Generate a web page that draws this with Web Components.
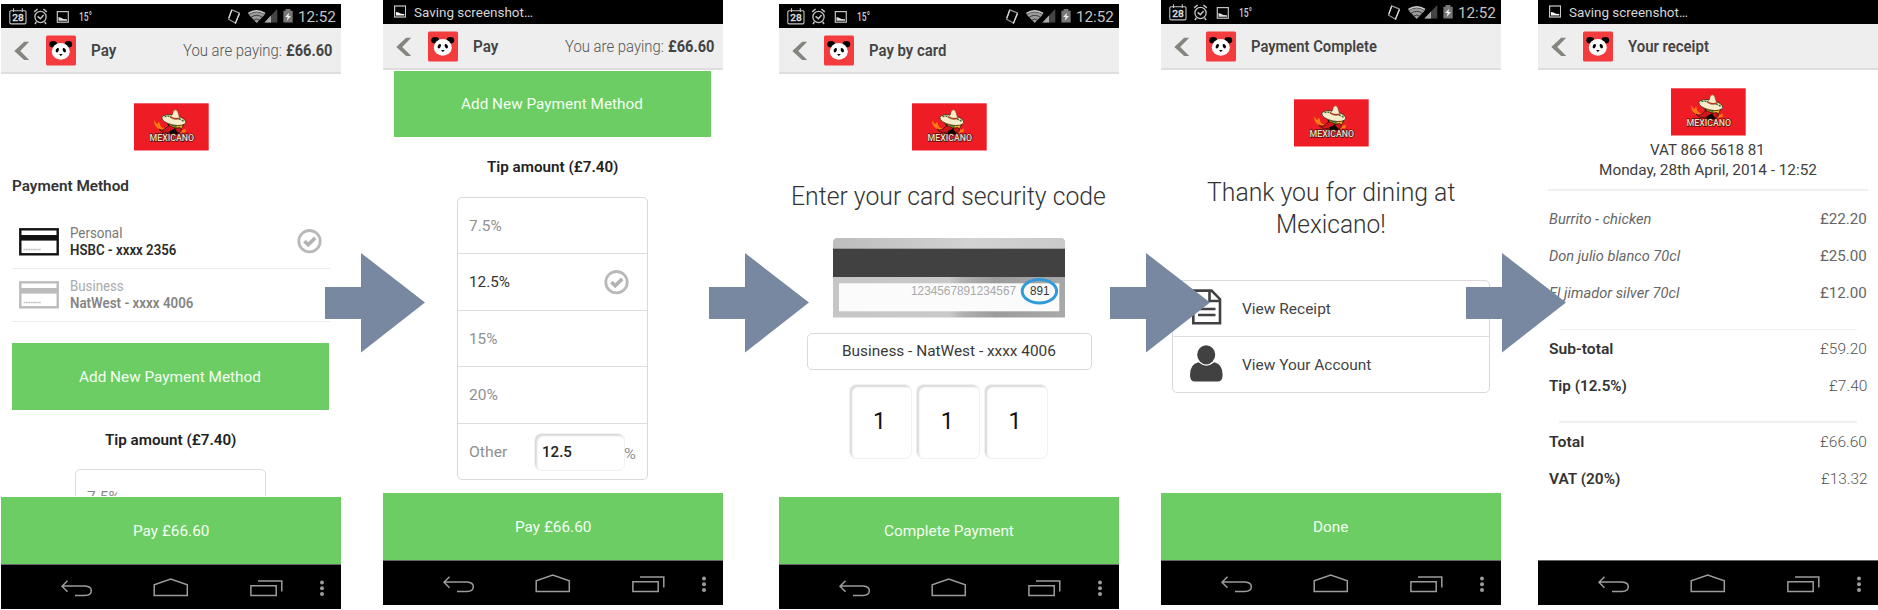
<!DOCTYPE html>
<html lang="en">
<head>
<meta charset="utf-8">
<title>Payment flow</title>
<style>
html, body { margin: 0; background: #fff; }
body { width: 1878px; height: 610px; overflow: hidden; font-family: Roboto, "Liberation Sans", sans-serif; }
</style>
</head>
<body>
<payment-flow></payment-flow>
<script>
function component(name, css, html, setup) {
  const tpl = document.createElement('template');
  tpl.innerHTML = '<style>' + css + '</style>' + html;
  customElements.define(name, class extends HTMLElement {
    constructor() {
      super();
      this.attachShadow({ mode: 'open' }).append(tpl.content.cloneNode(true));
    }
    connectedCallback() { if (setup) setup(this, this.shadowRoot); }
  });
}

component('payment-flow', `
  :host { display: block; position: relative; width: 1878px; height: 610px; overflow: hidden; }
  .row { display: flex; align-items: flex-start; padding-left: 1px; }
  phone-screen { flex: none; }
  .low { margin-top: 4px; }
  .b { margin-left: 42px; } .c { margin-left: 56px; } .d { margin-left: 42px; } .e { margin-left: 37px; }
  flow-arrow { position: absolute; top: 253px; }
`, `
  <div class="row">
    <phone-screen class="low"><status-bar></status-bar>
      <app-bar label="Pay" w="24" amount></app-bar><method-page></method-page>
      <action-bar><fit-text w="75">Pay £66.60</fit-text></action-bar></phone-screen>
    <phone-screen class="b"><status-bar saving></status-bar>
      <app-bar label="Pay" w="24" amount></app-bar><tip-page></tip-page>
      <action-bar><fit-text w="75">Pay £66.60</fit-text></action-bar></phone-screen>
    <phone-screen class="low c"><status-bar></status-bar>
      <app-bar label="Pay by card" w="76"></app-bar><code-page></code-page>
      <action-bar><fit-text w="128.5">Complete Payment</fit-text></action-bar></phone-screen>
    <phone-screen class="d"><status-bar></status-bar>
      <app-bar label="Payment Complete" w="124.5"></app-bar><thanks-page></thanks-page>
      <action-bar><fit-text w="34">Done</fit-text></action-bar></phone-screen>
    <phone-screen class="e"><status-bar saving></status-bar>
      <app-bar label="Your receipt" w="79.5"></app-bar><receipt-page></receipt-page></phone-screen>
  </div>
  <flow-arrow style="left:325px"></flow-arrow>
  <flow-arrow style="left:709px"></flow-arrow>
  <flow-arrow style="left:1110px"></flow-arrow>
  <flow-arrow style="left:1466px"></flow-arrow>
`);

component('flow-arrow', `:host { display: block; width: 100px; height: 100px; } svg { display: block; }`,
  `<svg width="100" height="100"><path d="M0 34H36V0L100 49.5 36 99.5V66H0z" fill="#7888a0"/></svg>`);

component('phone-screen', `
  :host { display: flex; flex-direction: column; width: 340px; height: 605px; background: #fff; }
  main { flex: 1; min-height: 0; display: flex; flex-direction: column; }
`, `<main><slot></slot></main><nav-bar></nav-bar>`);

component('status-bar', `
  :host { display: flex; height: 24px; background: #000; color: #ccc; align-items: center; flex: none; }
  svg { display: block; flex: none; }
  .full, .saving { display: none; width: 100%; align-items: center; height: 24px; }
  :host([saving]) .saving { display: flex; }
  :host(:not([saving])) .full { display: flex; }
  .saving fit-text { margin-left: 9px; font-size: 13.5px; color: #d5d5d5; }
  .temp { margin-left: 11px; font-size: 12px; font-weight: 500; padding-top: 1px; }
  .clock { margin-left: 6px; font-size: 15.5px; color: #c4c4c4; padding-top: 1px; }
  .gap { flex: 1; max-width: 133px; }
  text { font: 500 9.5px Roboto, sans-serif; }
`, `
  <div class="full">
    <svg width="68" height="24" fill="none" stroke="#c4c4c4">
      <path d="M10 6.7H24Q25 6.7 25 7.7V18.6Q25 19.9 23.8 19.9H10.2Q8.8 19.9 8.8 18.6V7.7Q8.8 6.7 10 6.7zM12.5 4.2V8M21.3 4.2V8" stroke-width="1.1"/>
      <text x="11.2" y="17" fill="#ddd" stroke="#ddd" stroke-width=".3" textLength="11.6" lengthAdjust="spacingAndGlyphs">28</text>
      <circle cx="39.5" cy="13" r="5.6" stroke-width="1.3"/>
      <path d="M36.6 12.4L39.4 14.7 42.6 11M33.2 7.8L36.6 5M45.8 7.8L42.4 5M35.3 18L34 20M43.7 18L45 20" stroke-width="1.5"/>
      <rect x="56.3" y="7.6" width="11" height="10.6" stroke-width="1.2"/>
      <path d="M57.5 16.8V13L60 13.8 62.5 15 66 15.2V16.8z" fill="#ddd" stroke="none"/>
    </svg>
    <fit-text class="temp" w="11.5">15°</fit-text>
    <div class="gap"></div>
    <svg width="67" height="24" style="margin-left:1px">
      <path d="M5.7 5.9L13.2 8.9 9.7 19.2 2.6 15.2z" fill="none" stroke="#999" stroke-width="1.2"/>
      <path d="M2.8 14L5.7 6.3M9.2 19.6L13.6 9.6" stroke="#ddd" stroke-width="1.2"/>
      <path d="M22 10Q30.7 3.6 39.5 10L30.7 19z" fill="#9a9a9a"/>
      <path d="M22 10.9Q30.7 4.6 39.5 10.9M24.6 13.6Q30.7 9 36.9 13.6M27.5 16.3Q30.7 13.7 34 16.3" fill="none" stroke="#000" stroke-width=".6"/>
      <path d="M22.5 9.3Q30.7 4 39 9.3" fill="none" stroke="#ccc" stroke-width="1.5"/>
      <path d="M51.3 5V18.4H38.4z" fill="#444"/><path d="M45 11.6V18.4H38.4z" fill="#aaa"/>
      <path d="M57.4 6.7H59.6V5.1H64.4V6.7H66.7V18.4H57.4z" fill="#777"/>
      <path d="M63 8.7L59.2 13H61.6L60.8 16.8 65 12H62.5z" fill="#eee"/>
    </svg>
    <fit-text class="clock" w="36.5">12:52</fit-text>
  </div>
  <div class="saving">
    <svg width="23" height="24"><rect x="11.6" y="6" width="11" height="11" fill="none" stroke="#ccc" stroke-width="1.2"/>
      <path d="M13 15.4V12L15.5 12.6 18 13.8 21.3 14V15.4z" fill="#fff"/></svg>
    <fit-text w="117.5">Saving screenshot…</fit-text>
  </div>
`);

component('app-bar', `
  :host { display: flex; flex: none; box-sizing: border-box; height: 46px; background: #eee;
    border-bottom: 2px solid #dedede; align-items: center; color: #444; font-size: 16px; }
  svg { display: block; flex: none; }
  .title { margin-left: 14.7px; font-weight: 600; padding-top: 1px; }
  .pay { display: none; margin-left: auto; padding: 1px 9.5px 0 0; gap: 5px; color: #555; }
  :host([amount]) .pay { display: flex; }
  .pay .k { font-weight: 300; } .pay .v { font-weight: 700; color: #444; }
`, `
  <svg width="76" height="44">
    <path d="M23.2 13.7H28.2L19.2 22.9 28.2 32.1H23.2L13.3 22.9z" fill="#85857f"/>
    <rect x="45" y="7.5" width="30" height="30" rx="1.5" fill="#f43b3e"/>
    <ellipse cx="52.2" cy="16.3" rx="3.9" ry="3.3" fill="#000"/><ellipse cx="67.3" cy="16.3" rx="3.9" ry="3.3" fill="#000"/>
    <ellipse cx="59.8" cy="23.4" rx="9" ry="8.4" fill="#fff"/>
    <ellipse cx="56.3" cy="22.2" rx="1.5" ry="2.3" fill="#000" transform="rotate(25 56.3 22.2)"/>
    <ellipse cx="63.3" cy="22.2" rx="1.5" ry="2.3" fill="#000" transform="rotate(-25 63.3 22.2)"/>
    <path d="M58 26.2Q59.8 25.6 61.8 26.2L59.8 28z" fill="#000"/>
  </svg>
  <fit-text class="title"></fit-text>
  <div class="pay"><fit-text class="k" w="97.5">You are paying:</fit-text><fit-text class="v" w="45">£66.60</fit-text></div>
`, (el, root) => {
  const t = root.querySelector('.title');
  t.textContent = el.getAttribute('label');
  t.setAttribute('w', el.getAttribute('w'));
});

component('nav-bar', `:host { display: block; height: 45.4px; flex: none; background: #000; border-top: .6px solid #666; box-sizing: border-box; } svg { display: block; }`, `
  <svg width="340" height="44" viewBox="0 .8 340 44" fill="none" stroke="#9c9c9c" stroke-width="1.5">
    <path d="M66.5 16.5L61 22 66.5 27.5M61.5 21.8H84Q90.3 22.2 90.3 26.5 90.3 31 84 31.3H74"/>
    <path d="M153.2 31.2V20.6L169.7 14.8 186.3 20.6V31.2z"/>
    <path d="M249.9 21.6H275.2V31.2H249.9zM257 16.9H280.8V27.3"/>
    <g fill="#9c9c9c" stroke="none"><circle cx="321" cy="18.2" r="2"/><circle cx="321" cy="24" r="2"/><circle cx="321" cy="29.8" r="2"/></g>
  </svg>`);

component('action-bar', `
  :host { display: flex; flex: none; height: 66.2px; margin-top: auto; background: #6bcd63; color: #f4fff2;
    align-items: center; justify-content: center; font-size: 15px; }`, `<slot></slot>`);

component('add-button', `
  :host { display: flex; flex: none; height: 66.2px; width: 317.3px; margin-left: 11.1px; background: #6bcd63; color: #f4fff2;
    align-items: center; justify-content: center; font-size: 15px; }`, `<fit-text w="180.5">Add New Payment Method</fit-text>`);

component('brand-logo', `:host { display: block; flex: none; width: 75px; height: 47.5px; margin: 0 auto; } svg { display: block; }
  text { font: 500 9.8px Roboto, sans-serif; }`, `
  <svg width="75" height="48">
    <rect y=".3" width="74.7" height="47.2" fill="#ee1c25"/>
    <path d="M20 17Q21.5 20 23.5 21L25 18.5 27 24 31 26 27 27Q22 25 20.5 21z" fill="#ff7a10"/>
    <path d="M46 28L52 25.5 51.5 29 46 30z" fill="#ff7a10"/>
    <path d="M33 20H51L47 27H36z" fill="#1d1205"/>
    <path d="M35 19L49 22 47 26 42 24.5 36 24z" fill="#f2b417"/>
    <path d="M25 26Q29 29 33 24Q37 21 40.5 25.5L46 24.5Q49 29 45 29.5L39.5 28.5 33 29.5Q27 30 25 26z" fill="#d4141d" stroke="#43140c" stroke-width=".8"/>
    <path d="M36 28L41 25.5 45 31.5H35z" fill="#0c0703"/>
    <path d="M38 22.2L42.6 23" stroke="#158238" stroke-width="2"/>
    <ellipse cx="39.8" cy="17" rx="12.2" ry="5" fill="#f7edcc" stroke="#4b250c" stroke-width=".8" transform="rotate(12 39.6 17)"/>
    <path d="M30.5 13.5Q40 12 50 18.5" fill="none" stroke="#357539" stroke-width="1.6" stroke-dasharray="2 1"/>
    <path d="M36 14.2Q39.2 12 39.2 8.2 41.5 5.5 43.6 8.3L45.8 15.6Q41 18 36 14.2z" fill="#f7edcc" stroke="#704019" stroke-width=".5"/>
    <path d="M36 13.7Q40.5 16.5 45.8 15" fill="none" stroke="#b33a1c" stroke-width="1.2"/>
    <text x="15.5" y="38.2" fill="#f0dfc4" stroke="#4a1410" stroke-width="1.3" paint-order="stroke" textLength="44.5" lengthAdjust="spacingAndGlyphs">MEXICANO</text>
  </svg>`);

component('check-mark', `:host { display: block; width: 25px; height: 25px; flex: none; } svg { display: block; }`, `
  <svg width="25" height="25"><circle cx="12.5" cy="12.2" r="10.7" fill="none" stroke="#b9b9b9" stroke-width="2.8"/>
  <path d="M7.4 12.1L11.2 15.7 18.2 8.9" fill="none" stroke="#b3b3b3" stroke-width="3.6"/></svg>`);

component('card-row', `
  :host { display: flex; flex: none; box-sizing: border-box; height: 53.2px; width: 317.5px; margin-left: 11.2px; padding-left: 7.3px;
    border-bottom: 1px solid #ebebeb; align-items: center; font-size: 14px; color: #777; }
  svg { display: block; flex: none; }
  .t { margin-left: 11.7px; display: flex; flex-direction: column; }
  ::slotted(*) { height: 17px; line-height: 17px; }
  ::slotted(.num) { font-weight: 600; color: #2b2b2b; }
  :host([dim]) { color: #aaa; }
  :host([dim]) ::slotted(.num) { color: #858585; }
  :host { --ink: #111; } :host([dim]) { --ink: #bcbcbc; }
  check-mark { margin-left: auto; margin-right: 7.5px; }
  :host([dim]) check-mark { display: none; }
`, `
  <svg width="40" height="28"><rect x="1.3" y="1.3" width="37.4" height="25" fill="#fff" style="stroke:var(--ink)" stroke-width="2.4"/>
    <rect x="1" y="7" width="38" height="5.6" style="fill:var(--ink)"/>
    <path d="M4.5 21.5H22" stroke="#c5c5c5" stroke-width="1.4" stroke-dasharray="2 .4"/></svg>
  <div class="t"><slot></slot></div><check-mark></check-mark>`);

component('method-page', `
  :host { display: flex; flex-direction: column; height: 422.3px; overflow: hidden; }
  brand-logo { margin-top: 29.2px; }
  .h { margin: 25px 0 20px 11.9px; height: 20px; line-height: 20px; font-size: 15.5px; font-weight: 600; color: #333; }
  add-button { margin-top: 21.4px; }
  .tip { align-self: center; margin-top: 20px; height: 20px; line-height: 20px; font-size: 15.5px; font-weight: 600; color: #222; }
  .box { box-sizing: border-box; width: 190.5px; height: 60px; margin: 19.4px 0 0 74.4px; flex: none; border: 1.2px solid #ddd; border-radius: 5px;
    padding: 17px 0 0 11.5px; font-size: 15px; line-height: 20px; color: #888; }
`, `
  <brand-logo></brand-logo>
  <fit-text class="h" w="115.5">Payment Method</fit-text>
  <card-row><fit-text w="51">Personal</fit-text><fit-text class="num" w="105">HSBC - xxxx 2356</fit-text></card-row>
  <card-row dim><fit-text w="52.3">Business</fit-text><fit-text class="num" w="122">NatWest - xxxx 4006</fit-text></card-row>
  <add-button></add-button>
  <fit-text class="tip" w="130">Tip amount (£7.40)</fit-text>
  <div class="box"><fit-text w="31.3">7.5%</fit-text></div>
`);

component('tip-page', `
  :host { display: flex; flex-direction: column; }
  add-button { margin-top: 1.1px; }
  .tip { align-self: center; margin-top: 20.2px; height: 20px; line-height: 20px; font-size: 15.5px; font-weight: 600; color: #222; }
  .list { box-sizing: border-box; width: 190.8px; height: 283.6px; margin: 19.4px 0 0 74.2px; border: 1.3px solid #d9d9d9; border-radius: 5px;
    display: flex; flex-direction: column; font-size: 15px; color: #909090; }
  .o { flex: 1; display: flex; align-items: center; padding: 0 18px 0 11.7px; border-bottom: 1.3px solid #dedede; }
  .o:last-child { border: 0; }
  .on { color: #333; } check-mark { margin-left: auto; }
  .in { box-sizing: border-box; width: 91px; height: 38px; margin-left: 27.5px; border-radius: 7px; border: 1px solid #f2f2f2;
    box-shadow: inset 2px 2px 2px #d8d8d8; display: flex; align-items: center; padding-left: 7.5px; color: #222; flex: none; font-weight: 500; }
  .pc { font-size: 14px; padding-top: 4px; }
`, `
  <add-button></add-button>
  <fit-text class="tip" w="130">Tip amount (£7.40)</fit-text>
  <div class="list">
    <div class="o"><fit-text w="31.3">7.5%</fit-text></div>
    <div class="o on"><fit-text w="39.5">12.5%</fit-text><check-mark></check-mark></div>
    <div class="o"><fit-text w="27">15%</fit-text></div>
    <div class="o"><fit-text w="27.5">20%</fit-text></div>
    <div class="o"><fit-text w="37">Other</fit-text><div class="in"><fit-text w="28.5">12.5</fit-text></div><fit-text class="pc" w="10.5">%</fit-text></div>
  </div>
`);

component('security-card', `:host { display: block; width: 232px; height: 79px; flex: none; } svg { display: block; }
  text { font-family: "Liberation Sans", sans-serif; font-size: 12px; }`, `
  <svg width="232" height="79.4">
    <defs><linearGradient id="edge" x2="1"><stop offset="0" stop-color="#c6c6c6"/><stop offset=".5" stop-color="#c9c9c9"/><stop offset=".56" stop-color="#b0b0b0"/><stop offset=".7" stop-color="#9c9c9c"/><stop offset="1" stop-color="#a8a8a8"/></linearGradient>
    <linearGradient id="top" x2="1"><stop offset="0" stop-color="#bdbdbd"/><stop offset=".6" stop-color="#d2d2d2"/><stop offset="1" stop-color="#cacaca"/></linearGradient></defs>
    <path d="M0 79.4V5Q0 0 5 0H227Q232 0 232 5V79.4z" fill="url(#edge)"/>
    <path d="M0 11V5Q0 0 5 0H227Q232 0 232 5V11z" fill="url(#top)"/>
    <rect y="10.7" width="232" height="28.3" fill="#414141"/>
    <rect x="6" y="45.3" width="220.3" height="28" fill="#fbfbfb"/>
    <text x="78" y="57" fill="#a9a9a9" textLength="105" lengthAdjust="spacingAndGlyphs">1234567891234567</text>
    <text x="197" y="57" fill="#333" textLength="19.5" lengthAdjust="spacingAndGlyphs">891</text>
    <ellipse cx="206.4" cy="53.3" rx="17.2" ry="11.7" fill="none" stroke="#309bd8" stroke-width="3"/>
  </svg>`);

component('code-page', `
  :host { display: flex; flex-direction: column; align-items: center; }
  brand-logo { margin-top: 29.2px; }
  .h { margin-top: 31px; height: 30px; line-height: 30px; font-size: 25px; font-weight: 300; color: #333; }
  security-card { margin-top: 26.6px; }
  .sel { box-sizing: border-box; width: 285px; height: 37.3px; margin-top: 15.3px; border: 1.3px solid #d9d9d9; border-radius: 5px;
    display: flex; align-items: center; justify-content: center; font-size: 15px; color: #3a3a3a; }
  .pin { display: flex; gap: 4px; margin-top: 13.8px; margin-right: 1.5px; }
  .pin div { box-sizing: border-box; width: 63.7px; height: 75.5px; border: 1px solid #f1f1f1; border-radius: 7px; box-shadow: inset 2px 2px 2px #dadada;
    display: flex; align-items: center; justify-content: center; font-size: 23px; color: #111; padding-right: 2px; padding-top: 1px; }
`, `
  <brand-logo></brand-logo>
  <fit-text class="h" w="313.5">Enter your card security code</fit-text>
  <security-card></security-card>
  <div class="sel"><fit-text w="212.5">Business - NatWest - xxxx 4006</fit-text></div>
  <div class="pin"><div>1</div><div>1</div><div>1</div></div>
`);

component('thanks-page', `
  :host { display: flex; flex-direction: column; align-items: center; }
  brand-logo { margin-top: 29.2px; }
  .h { height: 32.2px; line-height: 32.2px; font-size: 25px; font-weight: 300; color: #333; }
  .first { margin-top: 30.3px; }
  .list { box-sizing: border-box; width: 317.5px; height: 113.2px; margin-top: 38.6px; border: 1.3px solid #d9d9d9; border-radius: 5px;
    display: flex; flex-direction: column; font-size: 15px; color: #444; }
  .o { flex: 1; display: flex; align-items: center; padding-left: 16.6px; gap: 20px; }
  .o:first-child { border-bottom: 1.3px solid #dedede; }
  .o svg { margin-top: -2px; }
  svg { display: block; }
`, `
  <brand-logo></brand-logo>
  <fit-text class="h first" w="247">Thank you for dining at</fit-text>
  <fit-text class="h" w="108.5">Mexicano!</fit-text>
  <div class="list">
    <div class="o"><svg width="33" height="37" fill="none" stroke="#414141" stroke-width="2.6">
      <path d="M3.3 1.6H21.5L30 10.2V34.2H3.3zM19.5 2V12H30M8 14.3H16.5M8 20H25.5M8 26H25.5"/></svg><fit-text w="87.5">View Receipt</fit-text></div>
    <div class="o"><svg width="33" height="37" fill="#414141"><ellipse cx="16.2" cy="9.8" rx="9" ry="9.6"/>
      <path d="M8.5 17.3Q16.2 24 24.3 17.3 32.6 19 32.6 30 32.6 36.6 27.5 36.6H5Q0 36.6 0 30 0 19 8.5 17.3z"/></svg><fit-text w="128">View Your Account</fit-text></div>
  </div>
`);

component('receipt-row', `
  :host { display: flex; flex: none; height: 36.7px; align-items: center; justify-content: space-between; padding: 0 11.5px 0 11.9px; font-size: 15px; color: #666; }
  ::slotted(.i) { font-style: italic; } ::slotted(.b) { font-weight: 600; color: #333; }
  ::slotted(.l) { font-weight: 300; color: #555; }
`, `<slot></slot>`);

component('receipt-page', `
  :host { display: flex; flex-direction: column; }
  brand-logo { margin-top: 18px; }
  .v { align-self: center; height: 20px; line-height: 20px; font-size: 15px; color: #404040; flex: none; }
  .v.first { margin-top: 4.8px; }
  hr { border: 0; height: 1.4px; background: #f0f0f0; margin: 0 21px; flex: none; }
  hr.wide { margin: 9.2px 9.7px 10px; }
  .s { height: 17.6px; flex: none; }
`, `
  <brand-logo></brand-logo>
  <fit-text class="v first" w="113.5">VAT 866 5618 81</fit-text>
  <fit-text class="v" w="216.5">Monday, 28th April, 2014 - 12:52</fit-text>
  <hr class="wide">
  <receipt-row><fit-text class="i" w="101">Burrito - chicken</fit-text><fit-text w="45.5">£22.20</fit-text></receipt-row>
  <receipt-row><fit-text class="i" w="129.7">Don julio blanco 70cl</fit-text><fit-text w="45.5">£25.00</fit-text></receipt-row>
  <receipt-row><fit-text class="i" w="129">El jimador silver 70cl</fit-text><fit-text w="45.5">£12.00</fit-text></receipt-row>
  <div class="s"></div><hr><div style="height:.6px"></div>
  <receipt-row><fit-text class="b" w="63">Sub-total</fit-text><fit-text class="l" w="45.5">£59.20</fit-text></receipt-row>
  <receipt-row><fit-text class="b" w="76.5">Tip (12.5%)</fit-text><fit-text class="l" w="37">£7.40</fit-text></receipt-row>
  <div class="s"></div><hr><div style="height:.6px"></div>
  <receipt-row><fit-text class="b" w="34">Total</fit-text><fit-text class="l" w="45.5">£66.60</fit-text></receipt-row>
  <receipt-row><fit-text class="b" w="70">VAT (20%)</fit-text><fit-text class="l" w="45">£13.32</fit-text></receipt-row>
`);

/* Condenses or widens a single line of text to the width given in "w". Defined last, when its surroundings are laid out. */
component('fit-text', `
  :host { display: block; flex: none; white-space: nowrap; }
  span { display: inline-block; transform-origin: 0 50%; }
`, `<span><slot></slot></span>`, (el, root) => {
  const w = parseFloat(el.getAttribute('w'));
  if (!w) return;
  el.style.width = w + 'px';
  const span = root.querySelector('span');
  const natural = span.getBoundingClientRect().width;
  if (natural) span.style.transform = 'translateX(-1px) scaleX(' + (w + 1.4) / natural + ')';
});
</script>
</body>
</html>
